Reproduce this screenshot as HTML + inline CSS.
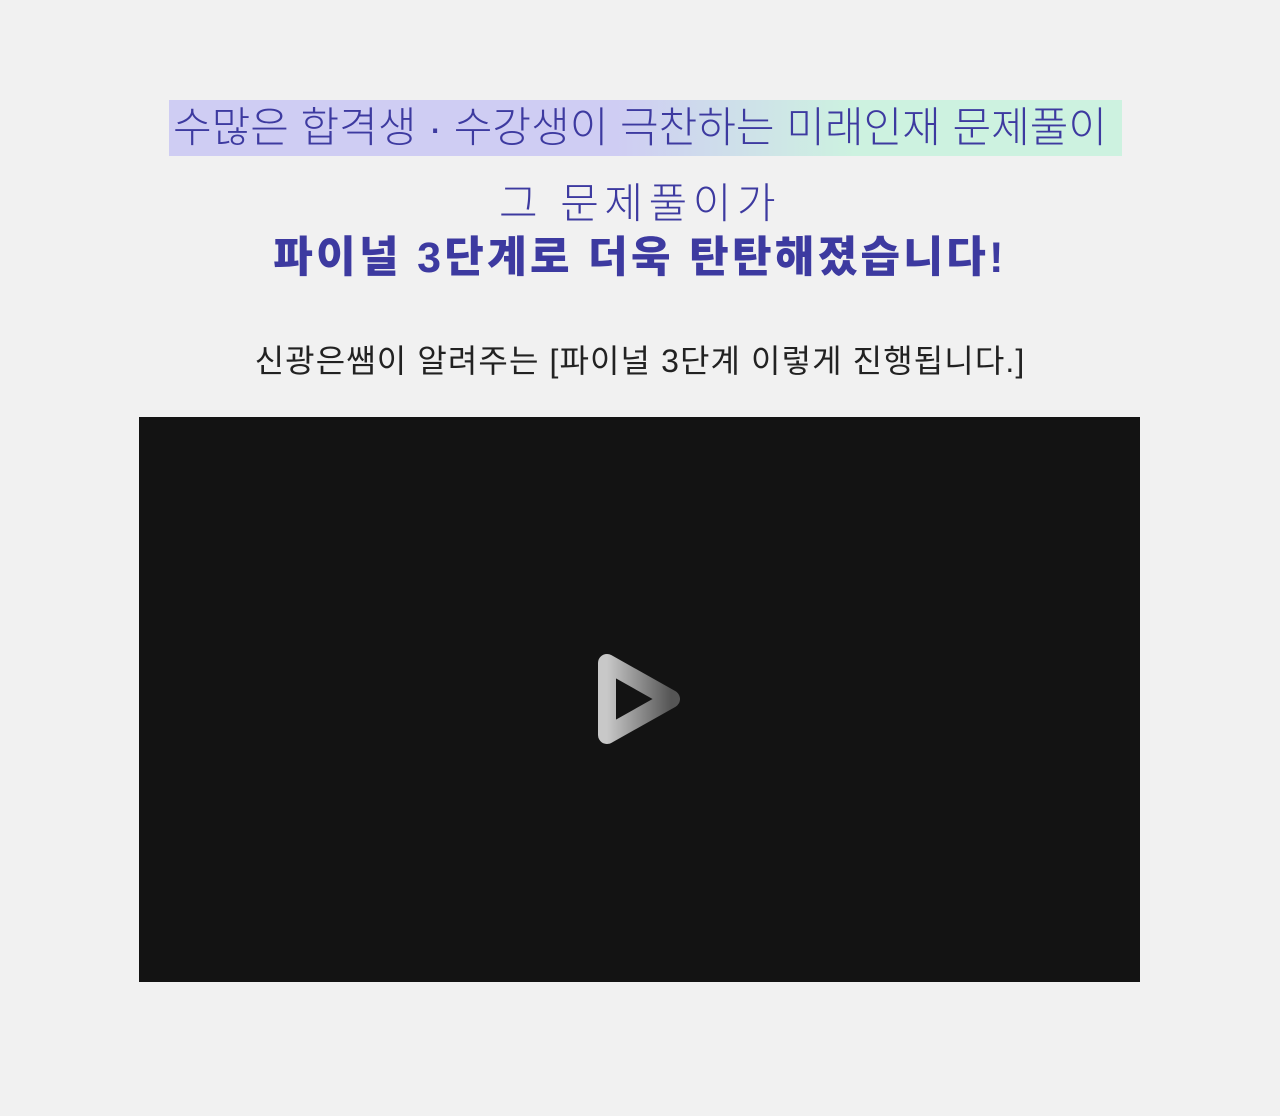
<!DOCTYPE html>
<html><head><meta charset="utf-8"><style>
body{margin:0;background:#f1f1f1;width:1280px;height:1116px;position:relative;font-family:"Liberation Sans","Noto Sans CJK KR",sans-serif;overflow:hidden}
.t{position:absolute;left:0;width:1280px;text-align:center;white-space:nowrap}
.band{position:absolute;left:169px;top:100px;width:953px;height:56px;background:linear-gradient(90deg,#cfcdf3 0%,#cfcdf3 47%,#cdf2e0 72%,#cdf2e0 100%)}
</style></head><body>
<div class="band"></div>
<div class="t" style="top:102px;font-size:42px;font-weight:300;color:#3d3aa0;line-height:52px;letter-spacing:0px">수많은 합격생 · 수강생이 극찬하는 미래인재 문제풀이</div>
<div class="t" style="top:178px;font-size:42px;font-weight:300;color:#3d3aa0;line-height:52px;letter-spacing:5.5px">그 문제풀이가</div>
<div class="t" style="top:232px;font-size:43px;font-weight:900;color:#3d3aa0;line-height:52px;letter-spacing:3.3px">파이널 3단계로 더욱 탄탄해졌습니다!</div>
<div class="t" style="top:340px;font-size:32px;color:#222;line-height:42px;letter-spacing:1.1px">신광은쌤이 알려주는 [파이널 3단계 이렇게 진행됩니다.]</div>
<div style="position:absolute;left:139px;top:417px;width:1001px;height:565px;background:#131313"></div>
<svg style="position:absolute;left:580px;top:640px" width="120" height="120" viewBox="0 0 120 120">
<defs><linearGradient id="g" x1="0" x2="1"><stop offset="0" stop-color="#c8c8c8"/><stop offset="1" stop-color="#555"/></linearGradient></defs>
<path d="M27 23 L91 59 L27 95 Z" fill="none" stroke="url(#g)" stroke-width="18" stroke-linejoin="round"/>
</svg>
</body></html>
